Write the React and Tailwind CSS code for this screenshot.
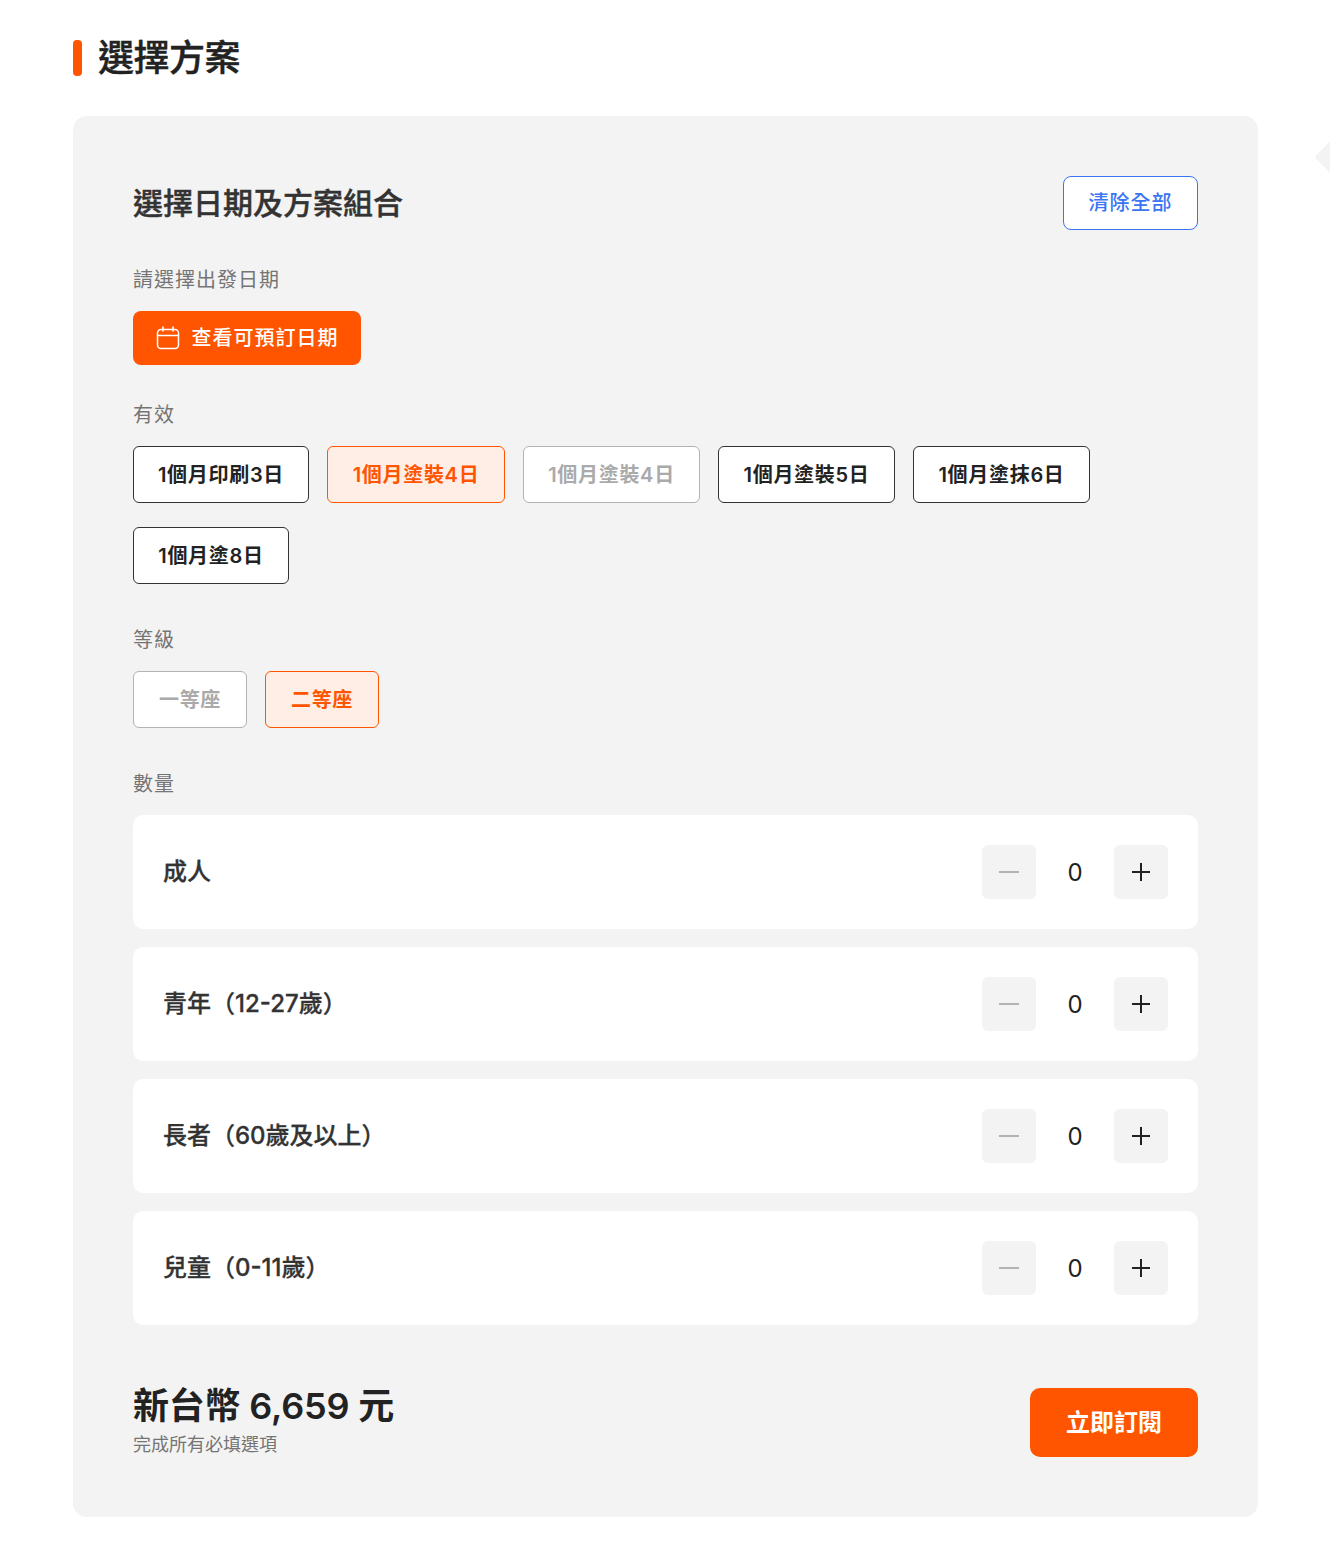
const FONT = "font-['Inter','Noto_Sans_CJK_TC',sans-serif]";

const planChips = [
  { label: '1個月印刷3日', state: 'normal', width: 'w-[176px]' },
  { label: '1個月塗裝4日', state: 'active', width: 'w-[178px]' },
  { label: '1個月塗裝4日', state: 'disabled', width: 'w-[177px]' },
  { label: '1個月塗裝5日', state: 'normal', width: 'w-[177px]' },
  { label: '1個月塗抹6日', state: 'normal', width: 'w-[177px]' },
  { label: '1個月塗8日', state: 'normal', width: 'w-[156px]' },
];

const classChips = [
  { label: '一等座', state: 'disabled', width: 'w-[114px]' },
  { label: '二等座', state: 'active', width: 'w-[114px]' },
];

const passengers = ['成人', '青年（12-27歲）', '長者（60歲及以上）', '兒童（0-11歲）'];

function Chip({ label, state, width }) {
  const styles = {
    normal: 'border-[#333333] bg-white text-[#222222]',
    active: 'border-[#ff5500] bg-[#ffeee5] text-[#ff5500]',
    disabled: 'border-[#b3b3b3] bg-white text-[#aaaaaa]',
  };
  return (
    <button className={`h-[57px] ${width} rounded-md border text-[20px] leading-[30px] font-semibold tracking-[0.7px] ${styles[state]}`}>
      {label}
    </button>
  );
}

function Label({ children }) {
  return <div className="mb-4 text-[20px] leading-[30px] tracking-[1px] text-[#757575]">{children}</div>;
}

function PassengerRow({ name }) {
  return (
    <div className="flex h-[114px] items-center justify-between rounded-[10px] bg-white px-[30px]">
      <span className="text-[24px] leading-[36px] font-medium text-[#333333] [-webkit-text-stroke:0.3px_#333333]">{name}</span>
      <div className="flex items-center">
        <button className="flex h-[54px] w-[54px] items-center justify-center rounded-md bg-[#f3f3f3]">
          <svg width="24" height="24" viewBox="0 0 24 24" fill="none">
            <path d="M2 12h20" stroke="#b3b3b3" strokeWidth="2" />
          </svg>
        </button>
        <span className="w-[78px] pt-[2px] text-center text-[24px] leading-[36px] text-[#222222]">0</span>
        <button className="flex h-[54px] w-[54px] items-center justify-center rounded-md bg-[#f3f3f3]">
          <svg width="24" height="24" viewBox="0 0 24 24" fill="none">
            <path d="M3 12h18M12 3v18" stroke="#222222" strokeWidth="2" />
          </svg>
        </button>
      </div>
    </div>
  );
}

export default function App() {
  return (
    <div className={`relative h-[1552px] overflow-hidden bg-white pt-[40px] pl-[73px] ${FONT}`}>
      {/* half-hidden carousel arrow on the right edge */}
      <div className="absolute top-[141px] left-[1321px] h-8 w-8 rotate-45 rounded-[3px] bg-[#f3f3f3]" />

      <div className="flex h-[36px] items-center">
        <span className="h-[36px] w-[9px] rounded-[4px] bg-[#ff5500]" />
        <h1 className="ml-[16px] text-[36px] leading-[36px] font-medium tracking-[-0.5px] text-[#222222] [-webkit-text-stroke:0.4px_#222222]">選擇方案</h1>
      </div>

      <div className="mt-[40px] h-[1401px] w-[1185px] rounded-[14px] bg-[#f3f3f3] p-[60px]">
        <div className="flex h-[54px] items-center justify-between">
          <h2 className="text-[30px] leading-[40px] font-medium text-[#333333] [-webkit-text-stroke:0.4px_#333333]">選擇日期及方案組合</h2>
          <button className="h-[54px] w-[135px] rounded-lg border border-[#3b74f5] bg-white text-[20px] font-medium tracking-[1px] text-[#3b74f5]">
            清除全部
          </button>
        </div>

        <div className="mt-[35px]">
          <Label>請選擇出發日期</Label>
          <button className="flex h-[54px] w-[228px] items-center justify-center gap-3 rounded-lg bg-[#ff5500] text-[20px] font-medium tracking-[1px] text-white">
            <svg width="24" height="24" viewBox="0 0 24 24" fill="none" stroke="white" strokeWidth="1.5" strokeLinecap="round">
              <rect x="1.5" y="3.5" width="21" height="19" rx="3.5" />
              <path d="M1.5 9.5h21M7 1v4M17 1v4" />
            </svg>
            查看可預訂日期
          </button>
        </div>

        <div className="mt-[35px]">
          <Label>有效</Label>
          <div className="flex w-[1000px] flex-wrap gap-x-[18px] gap-y-[24px]">
            {planChips.map((chip, i) => (
              <Chip key={i} {...chip} />
            ))}
          </div>
        </div>

        <div className="mt-[41px]">
          <Label>等級</Label>
          <div className="flex gap-[18px]">
            {classChips.map((chip) => (
              <Chip key={chip.label} {...chip} />
            ))}
          </div>
        </div>

        <div className="mt-[41px]">
          <Label>數量</Label>
          <div className="flex flex-col gap-[18px]">
            {passengers.map((name) => (
              <PassengerRow key={name} name={name} />
            ))}
          </div>
        </div>

        <div className="mt-[63px] flex items-start justify-between">
          <div className="-mt-[6px]">
            <div className="text-[36px] leading-[48px] font-semibold tracking-[-0.2px] text-[#222222]">新台幣 6,659 元</div>
            <div className="mt-[1px] text-[18px] leading-[27px] text-[#757575]">完成所有必填選項</div>
          </div>
          <button className="h-[69px] w-[168px] rounded-[10px] bg-[#ff5500] text-[24px] font-semibold text-white">
            立即訂閱
          </button>
        </div>
      </div>
    </div>
  );
}
